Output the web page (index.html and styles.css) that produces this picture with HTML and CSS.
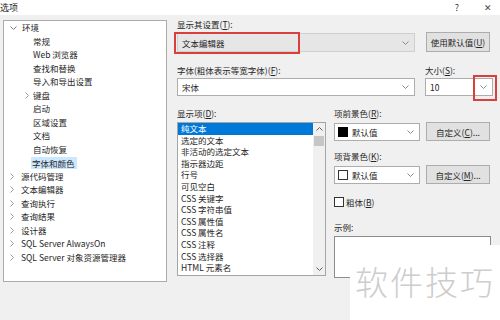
FILE: index.html
```html
<!DOCTYPE html>
<html lang="zh-CN">
<head>
    <meta charset="UTF-8">
    <title>选项</title>
    <link rel="stylesheet" href="styles.css">
</head>
<body>

<!-- title bar -->
<div class="titlebar">
    <span class="title">选项</span>
    <span class="help">?</span>
    <span class="close">✕</span>
</div>

<div class="main">

    <!-- left tree -->
    <div class="tree">
        <div class="node open"><span class="chev"><svg width="7" height="4" viewBox="0 0 7 4"><path d="M0.5 0.5L3.5 3.5L6.5 0.5" fill="none" stroke="#7a7a7a"/></svg></span>环境</div>
        <div class="node child">常规</div>
        <div class="node child">Web 浏览器</div>
        <div class="node child">查找和替换</div>
        <div class="node child">导入和导出设置</div>
        <div class="node child has-kids"><span class="chev"><svg width="4" height="7" viewBox="0 0 4 7"><path d="M0.5 0.5L3.5 3.5L0.5 6.5" fill="none" stroke="#9a9a9a"/></svg></span>键盘</div>
        <div class="node child">启动</div>
        <div class="node child">区域设置</div>
        <div class="node child">文档</div>
        <div class="node child">自动恢复</div>
        <div class="node child"><span class="picked">字体和颜色</span></div>
        <div class="node top"><span class="chev"><svg width="4" height="7" viewBox="0 0 4 7"><path d="M0.5 0.5L3.5 3.5L0.5 6.5" fill="none" stroke="#9a9a9a"/></svg></span>源代码管理</div>
        <div class="node top"><span class="chev"><svg width="4" height="7" viewBox="0 0 4 7"><path d="M0.5 0.5L3.5 3.5L0.5 6.5" fill="none" stroke="#9a9a9a"/></svg></span>文本编辑器</div>
        <div class="node top"><span class="chev"><svg width="4" height="7" viewBox="0 0 4 7"><path d="M0.5 0.5L3.5 3.5L0.5 6.5" fill="none" stroke="#9a9a9a"/></svg></span>查询执行</div>
        <div class="node top"><span class="chev"><svg width="4" height="7" viewBox="0 0 4 7"><path d="M0.5 0.5L3.5 3.5L0.5 6.5" fill="none" stroke="#9a9a9a"/></svg></span>查询结果</div>
        <div class="node top"><span class="chev"><svg width="4" height="7" viewBox="0 0 4 7"><path d="M0.5 0.5L3.5 3.5L0.5 6.5" fill="none" stroke="#9a9a9a"/></svg></span>设计器</div>
        <div class="node top"><span class="chev"><svg width="4" height="7" viewBox="0 0 4 7"><path d="M0.5 0.5L3.5 3.5L0.5 6.5" fill="none" stroke="#9a9a9a"/></svg></span>SQL Server AlwaysOn</div>
        <div class="node top"><span class="chev"><svg width="4" height="7" viewBox="0 0 4 7"><path d="M0.5 0.5L3.5 3.5L0.5 6.5" fill="none" stroke="#9a9a9a"/></svg></span>SQL Server 对象资源管理器</div>
    </div>

    <!-- right settings -->
    <div class="settings">

        <div class="label">显示其设置(<u>T</u>):</div>
        <div class="line">
            <div class="combo combo-wide disabled">
                <span class="value">文本编辑器</span>
                <svg class="arrow" width="7" height="4" viewBox="0 0 7 4"><path d="M0.5 0.5L3.5 3.5L6.5 0.5" fill="none" stroke="#8a8a8a"/></svg>
                <div class="mark mark-show"></div>
            </div>
            <div class="btn btn-default">使用默认值(<u>U</u>)</div>
        </div>

        <div class="line line-font">
            <div class="col-font">
                <div class="label label-b">字体(粗体表示等宽字体)(<u>F</u>):</div>
                <div class="combo combo-wide">
                    <span class="value">宋体</span>
                    <svg class="arrow" width="7" height="4" viewBox="0 0 7 4"><path d="M0.5 0.5L3.5 3.5L6.5 0.5" fill="none" stroke="#8a8a8a"/></svg>
                </div>
            </div>
            <div class="col-size">
                <div class="label label-b">大小(<u>S</u>):</div>
                <div class="combo combo-size">
                    <span class="value">10</span>
                    <svg class="arrow" width="7" height="4" viewBox="0 0 7 4"><path d="M0.5 0.5L3.5 3.5L6.5 0.5" fill="none" stroke="#8a8a8a"/></svg>
                    <div class="mark mark-size"></div>
                </div>
            </div>
        </div>

        <div class="line line-items">
            <div class="col-list">
                <div class="label">显示项(<u>D</u>):</div>
                <div class="listbox">
                    <div class="items">
                        <div class="item selected">纯文本</div>
                        <div class="item">选定的文本</div>
                        <div class="item">非活动的选定文本</div>
                        <div class="item">指示器边距</div>
                        <div class="item">行号</div>
                        <div class="item">可见空白</div>
                        <div class="item">CSS 关键字</div>
                        <div class="item">CSS 字符串值</div>
                        <div class="item">CSS 属性值</div>
                        <div class="item">CSS 属性名</div>
                        <div class="item">CSS 注释</div>
                        <div class="item">CSS 选择器</div>
                        <div class="item">HTML 元素名</div>
                    </div>
                    <div class="scrollbar">
                        <svg class="sb-arrow" width="7" height="4" viewBox="0 0 7 4"><path d="M0.5 3.5L3.5 0.5L6.5 3.5" fill="none" stroke="#606060"/></svg>
                        <div class="thumb"></div>
                        <svg class="sb-arrow sb-down" width="7" height="4" viewBox="0 0 7 4"><path d="M0.5 0.5L3.5 3.5L6.5 0.5" fill="none" stroke="#606060"/></svg>
                    </div>
                </div>
            </div>

            <div class="col-props">
                <div class="label">项前景色(<u>R</u>):</div>
                <div class="line">
                    <div class="combo combo-color">
                        <span class="swatch swatch-black"></span>
                        <span class="value">默认值</span>
                        <svg class="arrow" width="7" height="4" viewBox="0 0 7 4"><path d="M0.5 0.5L3.5 3.5L6.5 0.5" fill="none" stroke="#8a8a8a"/></svg>
                    </div>
                    <div class="btn btn-custom">自定义(<u>C</u>)...</div>
                </div>

                <div class="label label-gap">项背景色(<u>K</u>):</div>
                <div class="line">
                    <div class="combo combo-color">
                        <span class="swatch swatch-white"></span>
                        <span class="value">默认值</span>
                        <svg class="arrow" width="7" height="4" viewBox="0 0 7 4"><path d="M0.5 0.5L3.5 3.5L6.5 0.5" fill="none" stroke="#8a8a8a"/></svg>
                    </div>
                    <div class="btn btn-custom">自定义(<u>M</u>)...</div>
                </div>

                <div class="check-row">
                    <span class="checkbox"></span>
                    <span>粗体(<u>B</u>)</span>
                </div>

                <div class="label label-sample">示例:</div>
                <div class="sample"></div>
            </div>
        </div>

    </div>
</div>

<div class="watermark">软件技巧</div>

</body>
</html>
```

FILE: styles.css
```css
* {
    box-sizing: border-box;
}

body {
    margin: 0;
    width: 500px;
    height: 320px;
    overflow: hidden;
    position: relative;
    background: #f0f0f0;
    font-family: "Noto Sans CJK SC", "Noto Sans", sans-serif;
    font-size: 8.5px;
    color: #262626;
}

u {
    text-decoration: underline;
    text-underline-offset: 1px;
}

/* title bar */
.titlebar {
    height: 15px;
    background: #fff;
    display: flex;
    align-items: center;
    font-size: 9px;
}
.title {
    margin-left: 0;
}
.help {
    margin-left: auto;
    margin-right: 25px;
    color: #333;
}
.close {
    margin-right: 8px;
    color: #444;
    font-size: 9px;
}

.main {
    display: flex;
    padding: 5px 0 0 3px;
}

/* tree */
.tree {
    width: 164px;
    height: 262px;
    border: 1px solid #ababab;
    background: #fff;
}
.node {
    height: 13.5px;
    line-height: 13.5px;
    display: flex;
    align-items: center;
    white-space: nowrap;
}
.chev {
    display: inline-flex;
    align-items: center;
}
.node.open {
    padding-left: 6px;
}
.node.open .chev {
    width: 12px;
}
.node.child {
    padding-left: 29px;
}
.node.child.has-kids {
    padding-left: 21px;
}
.node.child.has-kids .chev {
    width: 8px;
}
.node.top {
    padding-left: 6px;
}
.node.top .chev {
    width: 11px;
}
.picked {
    background: #cce8ff;
    padding: 0 2px 0 1px;
    margin-left: -2px;
    line-height: 12px;
}

/* settings panel */
.settings {
    margin-left: 10px;
    margin-top: -1px;
    width: 318px;
}
.label {
    height: 10px;
    line-height: 10px;
    margin-bottom: 4px;
    white-space: nowrap;
}
.label-b {
    margin-bottom: 3px;
}
.line {
    display: flex;
    align-items: center;
}
.line-font {
    margin-top: 13px;
    align-items: flex-start;
}
.line-items {
    margin-top: 12px;
    align-items: flex-start;
}

.combo {
    position: relative;
    height: 18px;
    border: 1px solid #adadad;
    background: #fff;
    display: flex;
    align-items: center;
    padding-left: 4px;
}
.combo .arrow {
    margin-left: auto;
    margin-right: 5px;
}
.combo-wide {
    width: 238px;
}
.combo.disabled {
    height: 19px;
    background: #e6e6e6;
    border-color: #cfcfcf;
}
.combo-size {
    width: 68px;
}
.combo-color {
    width: 86px;
    padding-left: 3px;
}

.btn {
    height: 19px;
    border: 1px solid #adadad;
    background: #e1e1e1;
    display: flex;
    align-items: center;
    justify-content: center;
    white-space: nowrap;
}
.btn-default {
    width: 64px;
    height: 20px;
    margin-left: 11px;
    margin-top: -1px;
}
.btn-custom {
    width: 64px;
    margin-left: 6px;
}

.col-size {
    margin-left: 10px;
}

/* red annotation boxes */
.mark {
    position: absolute;
    border: 2px solid #d8403e;
}
.mark-show {
    left: -4px;
    top: -2px;
    width: 126px;
    height: 22px;
}
.mark-size {
    left: 47px;
    top: -4px;
    width: 24px;
    height: 26px;
}

/* list of display items */
.listbox {
    width: 149px;
    height: 154px;
    border: 1px solid #a5a5a5;
    background: #fff;
    display: flex;
}
.items {
    flex: 1;
}
.item {
    height: 11.6px;
    line-height: 11.6px;
    padding-left: 3px;
    white-space: nowrap;
}
.item.selected {
    background: #0078d7;
    color: #fff;
}
.scrollbar {
    width: 12px;
    background: #f0f0f0;
    display: flex;
    flex-direction: column;
    align-items: center;
}
.sb-arrow {
    margin-top: 4px;
    margin-bottom: 5px;
}
.thumb {
    width: 10px;
    height: 10px;
    background: #c6c6c6;
}
.sb-down {
    margin-top: auto;
    margin-bottom: 4px;
}

.col-props {
    margin-left: 8px;
}
.label-gap {
    margin-top: 10px;
}
.swatch {
    width: 10px;
    height: 10px;
    margin-right: 4px;
}
.swatch-black {
    background: #000;
}
.swatch-white {
    background: #fff;
    border: 1px solid #333;
}

.check-row {
    margin-top: 13px;
    height: 10px;
    display: flex;
    align-items: center;
}
.checkbox {
    width: 10px;
    height: 10px;
    border: 1px solid #333;
    background: #fff;
    margin-right: 2px;
}
.label-sample {
    margin-top: 15px;
}
.sample {
    width: 157px;
    height: 42px;
    border: 1px solid #8c8c8c;
    background: #fff;
}

/* watermark overlay */
.watermark {
    position: absolute;
    left: 350px;
    top: 245px;
    width: 150px;
    height: 75px;
    background: #fff;
    padding: 19px 0 0 5px;
    font-size: 33px;
    line-height: 34px;
    letter-spacing: 2px;
    font-weight: 300;
    color: #cdcdcd;
    white-space: nowrap;
}
```
